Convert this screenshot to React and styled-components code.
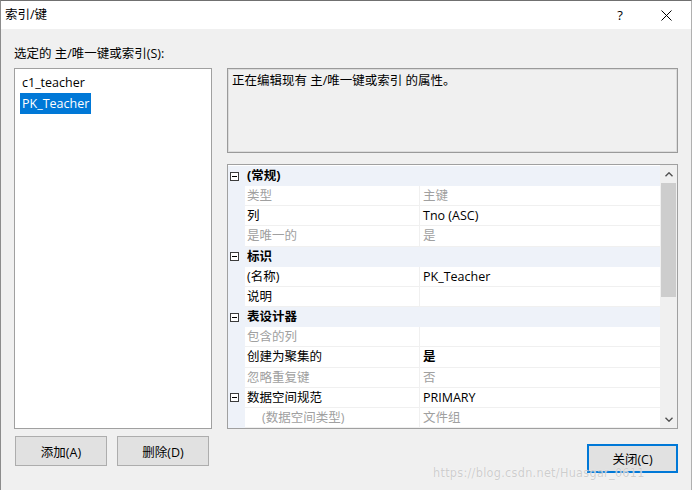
import React from 'react';
import styled, { createGlobalStyle } from 'styled-components';

const FONT = `"Open Sans", "Noto Sans CJK SC", sans-serif`;

const Global = createGlobalStyle`
  html, body { margin: 0; padding: 0; background: #f0f0f0; }
  body { font-family: ${FONT}; font-size: 12.5px; color: #000; }
  * { box-sizing: border-box; }
`;

const Window = styled.div`
  position: relative;
  width: 692px;
  height: 490px;
  display: flex;
  flex-direction: column;
  border-left: 1px solid #8c8c8c;
  border-top: 1px solid #707070;
  border-right: 1px solid #b0b0b0;
  background: #f0f0f0;
  overflow: hidden;
`;

const TitleBar = styled.div`
  height: 28px;
  flex: none;
  display: flex;
  align-items: center;
  background: #fff;
  padding-left: 4px;
`;

const Title = styled.div`
  flex: 1;
  font-size: 12.5px;
  line-height: 16px;
  color: #000;
`;

const CaptionButton = styled.div`
  width: 46px;
  height: 28px;
  display: flex;
  align-items: center;
  justify-content: center;
  font-size: 13px;
  color: #000;
  &:last-child { margin-right: 2px; }
`;

const Body = styled.div`
  flex: 1;
  display: flex;
  flex-direction: column;
  padding: 0 13px;
`;

const Label = styled.div`
  margin-top: 16px;
  line-height: 17px;
  height: 17px;
`;

const Main = styled.div`
  margin-top: 6px;
  height: 356px;
  display: grid;
  grid-template-columns: 198px 1fr;
  column-gap: 15px;
`;

const ListBox = styled.div`
  background: #fff;
  border: 1px solid #a0a0a0;
  padding: 3px 0 0 5px;
  display: flex;
  flex-direction: column;
  align-items: flex-start;
`;

const ListItem = styled.div`
  height: 21px;
  line-height: 21px;
  padding: 0 2px;
  background: ${p => (p.$selected ? '#0078d7' : 'transparent')};
  color: ${p => (p.$selected ? '#fff' : '#000')};
`;

const RightCol = styled.div`
  display: flex;
  flex-direction: column;
  gap: 11px;
`;

const Description = styled.div`
  height: 85px;
  flex: none;
  border: 1px solid #9a9a9a;
  box-shadow: inset 0 0 0 1px #dcdcdc;
  background: #f0f0f0;
  padding: 3px 4px;
  line-height: 17px;
`;

const Grid = styled.div`
  flex: 1;
  display: flex;
  border: 1px solid #a0a0a0;
  background: #fff;
  overflow: hidden;
`;

const Rows = styled.div`
  flex: 1;
  overflow: hidden;
  padding-top: 1px;
`;

const Row = styled.div`
  height: 20.17px;
  display: grid;
  grid-template-columns: 17px 175px 1fr;
  background: ${p => (p.$category ? '#eef2f9' : '#fff')};
  line-height: 20px;
  font-weight: ${p => (p.$category ? 700 : 400)};
`;

const Gutter = styled.div`
  background: #eef2f9;
  display: flex;
  align-items: center;
  padding-left: 2px;
`;

const MinusBox = styled.span`
  position: relative;
  width: 9px;
  height: 9px;
  border: 1px solid #3c3c3c;
  background: #fff;
  &::after {
    content: '';
    position: absolute;
    left: 1px;
    right: 1px;
    top: 3px;
    height: 1px;
    background: #000;
  }
`;

const NameCell = styled.div`
  padding-left: ${p => (p.$indent ? 17 : 2)}px;
  white-space: nowrap;
  overflow: hidden;
  color: ${p => (p.$disabled ? '#a0a0a0' : '#000')};
  border-bottom: ${p => (p.$category ? 'none' : '1px solid #f0f0f0')};
  border-right: ${p => (p.$category ? 'none' : '1px solid #f0f0f0')};
`;

const ValueCell = styled.div`
  padding-left: 3px;
  white-space: nowrap;
  overflow: hidden;
  color: ${p => (p.$disabled ? '#a0a0a0' : '#000')};
  font-weight: ${p => (p.$bold ? 700 : 400)};
  border-bottom: ${p => (p.$category ? 'none' : '1px solid #f0f0f0')};
`;

const ScrollBar = styled.div`
  width: 17px;
  flex: none;
  display: flex;
  flex-direction: column;
  background: #f0f0f0;
`;

const ScrollArrow = styled.div`
  height: 18px;
  flex: none;
  display: flex;
  align-items: center;
  justify-content: center;
`;

const Track = styled.div`
  flex: 1;
  padding: 0 1px 0 1px;
`;

const Thumb = styled.div`
  height: 114px;
  background: #cdcdcd;
`;

const Footer = styled.div`
  flex: 1;
  display: flex;
  justify-content: space-between;
  align-items: flex-start;
  padding-top: 12px;
`;

const ButtonGroup = styled.div`
  display: flex;
  gap: 10px;
  padding-left: 1px;
`;

const Button = styled.div`
  width: ${p => (p.$primary ? 91 : 92)}px;
  height: ${p => (p.$primary ? 29 : 30)}px;
  margin-top: ${p => (p.$primary ? 8 : 0)}px;
  display: flex;
  align-items: center;
  justify-content: center;
  background: #e1e1e1;
  border: ${p => (p.$primary ? '2px solid #0078d7' : '1px solid #adadad')};
  color: #000;
`;

const Watermark = styled.div`
  position: absolute;
  left: 432px;
  top: 465px;
  font-family: "DejaVu Sans Condensed", "Liberation Sans", sans-serif;
  font-size: 12.5px;
  line-height: 14px;
  letter-spacing: 0.3px;
  color: rgba(190, 190, 190, 0.75);
  text-shadow: 0 0 1px #fff;
  pointer-events: none;
`;

const Chevron = ({ down }) => (
  <svg width="8" height="5" viewBox="0 0 8 5">
    <path
      d={down ? 'M0.5 0.8 L4 4.2 L7.5 0.8' : 'M0.5 4.2 L4 0.8 L7.5 4.2'}
      fill="none"
      stroke="#505050"
      strokeWidth="1.4"
    />
  </svg>
);

const rows = [
  { cat: true, name: '(常规)' },
  { name: '类型', value: '主键', disabled: true },
  { name: '列', value: 'Tno (ASC)' },
  { name: '是唯一的', value: '是', disabled: true },
  { cat: true, name: '标识' },
  { name: '(名称)', value: 'PK_Teacher' },
  { name: '说明', value: '' },
  { cat: true, name: '表设计器' },
  { name: '包含的列', value: '', disabled: true },
  { name: '创建为聚集的', value: '是', bold: true },
  { name: '忽略重复键', value: '否', disabled: true },
  { name: '数据空间规范', value: 'PRIMARY', expand: true },
  { name: '(数据空间类型)', value: '文件组', disabled: true, indent: true },
];

export default function App() {
  return (
    <>
      <Global />
      <Window>
        <TitleBar>
          <Title>索引/键</Title>
          <CaptionButton>?</CaptionButton>
          <CaptionButton>
            <svg width="11" height="11" viewBox="0 0 11 11">
              <path d="M0.5 0.5 L10.5 10.5 M10.5 0.5 L0.5 10.5" stroke="#000" strokeWidth="1" />
            </svg>
          </CaptionButton>
        </TitleBar>
        <Body>
          <Label>选定的 主/唯一键或索引(S):</Label>
          <Main>
            <ListBox>
              <ListItem>c1_teacher</ListItem>
              <ListItem $selected>PK_Teacher</ListItem>
            </ListBox>
            <RightCol>
              <Description>正在编辑现有 主/唯一键或索引 的属性。</Description>
              <Grid>
                <Rows>
                  {rows.map((r, i) =>
                    r.cat ? (
                      <Row key={i} $category>
                        <Gutter><MinusBox /></Gutter>
                        <NameCell $category>{r.name}</NameCell>
                        <ValueCell $category />
                      </Row>
                    ) : (
                      <Row key={i}>
                        <Gutter>{r.expand && <MinusBox />}</Gutter>
                        <NameCell $disabled={r.disabled} $indent={r.indent}>{r.name}</NameCell>
                        <ValueCell $disabled={r.disabled} $bold={r.bold}>{r.value}</ValueCell>
                      </Row>
                    )
                  )}
                </Rows>
                <ScrollBar>
                  <ScrollArrow><Chevron /></ScrollArrow>
                  <Track><Thumb /></Track>
                  <ScrollArrow><Chevron down /></ScrollArrow>
                </ScrollBar>
              </Grid>
            </RightCol>
          </Main>
          <Footer>
            <ButtonGroup>
              <Button>添加(A)</Button>
              <Button>删除(D)</Button>
            </ButtonGroup>
            <Button $primary>关闭(C)</Button>
          </Footer>
        </Body>
        <Watermark>https://blog.csdn.net/Huasgar_0611</Watermark>
      </Window>
    </>
  );
}
